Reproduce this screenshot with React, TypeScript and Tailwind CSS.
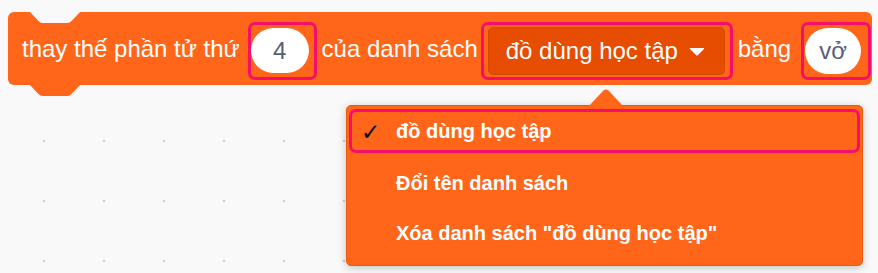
import React from "react";

const PINK = "border-[#f50f6a]";

export default function App() {
  return (
    <div
      className="relative w-[878px] h-[273px] overflow-hidden bg-[#f9f9f9] bg-[radial-gradient(circle,#cfcfcf_1.1px,transparent_1.6px)] bg-[length:60px_60px] bg-[position:14px_-9px] font-['Liberation_Sans',Arial,sans-serif]"
    >
      {/* Block */}
      <div className="relative ml-[8px] mt-[12px] w-[864px] h-[73px] rounded-[6px] bg-[#ff661a] flex items-center pl-[14px] text-white text-[24px] leading-none">
        {/* top notch */}
        <svg className="absolute left-[21px] top-[-1px]" width="52" height="12" viewBox="0 0 52 12">
          <path d="M0 0 L9 9.5 Q11 12 14 12 L38 12 Q41 12 43 9.5 L52 0 Z" fill="#f9f9f9" />
        </svg>
        {/* bottom tab */}
        <svg className="absolute left-[21px] top-[72px]" width="52" height="12" viewBox="0 0 52 12">
          <path d="M0 0 L9 9.5 Q11 12 14 12 L38 12 Q41 12 43 9.5 L52 0 Z" fill="#ff661a" />
        </svg>

        <span className="whitespace-nowrap">thay thế phần tử thứ</span>

        <div className={`ml-[8px] mt-[4px] w-[69px] h-[58px] rounded-[7px] border-[3px] ${PINK} flex items-center pr-[4px]`}>
          <div className="w-[58px] h-[45px] rounded-full bg-white flex items-center justify-center text-[#575e75]">
            4
          </div>
        </div>

        <span className="ml-[5px] whitespace-nowrap">của danh sách</span>

        <div className={`ml-[3px] mt-[4px] w-[252px] h-[58px] rounded-[7px] border-[3px] ${PINK} flex items-center pl-[4px]`}>
          <div className="w-[237px] h-[48px] rounded-[5px] bg-[#e64d00] border border-[#d94800] flex items-center pl-[17px]">
            <span className="whitespace-nowrap">đồ dùng học tập</span>
            <svg className="ml-[11px] mt-[2px]" width="16" height="9" viewBox="0 0 16 9">
              <path d="M1.5 1 L14.5 1 Q15.8 1 15 2 L9 8 Q8 9 7 8 L1 2 Q0.2 1 1.5 1 Z" fill="#ffffff" />
            </svg>
          </div>
        </div>

        <span className="ml-[5px] whitespace-nowrap">bằng</span>

        <div className={`ml-[10px] mt-[4px] w-[70px] h-[58px] rounded-[7px] border-[3px] ${PINK} flex items-center pl-[1px]`}>
          <div className="w-[56px] h-[46px] rounded-full bg-white flex items-center justify-center text-[#575e75]">
            vở
          </div>
        </div>
      </div>

      {/* Dropdown menu */}
      <div className="absolute left-[346px] top-[105px] w-[517px] h-[161px] rounded-[5px] bg-[#ff661a] border border-[#e85a10] shadow-[0_2px_8px_rgba(0,0,0,0.22)] text-white font-bold text-[20px] leading-none">
        <svg className="absolute left-[241px] top-[-17px]" width="36" height="18" viewBox="0 0 36 18">
          <path d="M0 18 L15.5 1.5 Q18 -0.5 20.5 1.5 L36 18 Z" fill="#ff661a" />
        </svg>
        <div className="pt-[3px] px-[2px]">
          <div className={`relative h-[44px] rounded-[7px] border-[3px] ${PINK} flex items-center pl-[44px]`}>
            <span className="absolute left-[9px] top-[9px] text-black text-[23px] font-bold italic font-['DejaVu_Sans',sans-serif]">✓</span>
            <span className="whitespace-nowrap">đồ dùng học tập</span>
          </div>
        </div>
        <div className="mt-[5px] h-[50px] flex items-center pl-[49px] whitespace-nowrap">Đổi tên danh sách</div>
        <div className="h-[50px] flex items-center pl-[49px] whitespace-nowrap">Xóa danh sách "đồ dùng học tập"</div>
      </div>
    </div>
  );
}
